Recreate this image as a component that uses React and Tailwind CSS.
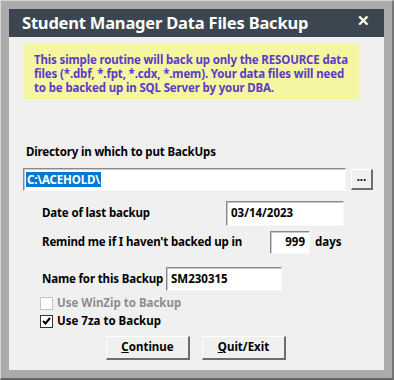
import React from "react";

const font = { fontFamily: '"Noto Sans", "Open Sans", sans-serif' };

const Sunken = ({ className = "", children }) => (
  <div
    className={`bg-white border-t border-l border-[#8a8a8a] border-b border-r border-b-[#f8f8f8] border-r-[#f8f8f8] shadow-[inset_1px_1px_0_#c8c8c8] flex items-center ${className}`}
  >
    {children}
  </div>
);

const Raised = ({ className = "", children }) => (
  <button
    className={`bg-[#f0f0f0] border-t border-l border-white border-b-2 border-r-2 border-b-[#6e6e6e] border-r-[#6e6e6e] flex items-center justify-center text-[11.5px] font-bold text-black ${className}`}
  >
    {children}
  </button>
);

const Check = ({ checked, disabled, label }) => (
  <div className="flex items-center h-[13px]">
    <div
      className={`w-[13px] h-[13px] bg-white border flex items-center justify-center ${
        disabled ? "border-[#c4c4c4]" : "border-[#333]"
      }`}
    >
      {checked && (
        <svg width="9" height="8" viewBox="0 0 9 8">
          <path d="M1 4 L3.5 6.5 L8 1" stroke="#000" strokeWidth="2" fill="none" />
        </svg>
      )}
    </div>
    <span
      className={`ml-[4px] text-[11.5px] font-bold whitespace-nowrap ${disabled ? "text-[#8d8d8d]" : "text-black"}`}
    >
      {label}
    </span>
  </div>
);

export default function App() {
  return (
    <div
      style={font}
      className="w-[394px] h-[380px] bg-[#ababab] border-t border-l border-[#d6d6d6] border-b-2 border-r-2 border-b-[#666] border-r-[#777] p-[8px] flex flex-col"
    >
      {/* Title bar */}
      <div className="h-[28px] bg-[#3c4650] flex items-center justify-between pl-[13px] pr-[14px]">
        <span className="text-white font-bold text-[16.5px] leading-none tracking-[-0.2px]">
          Student Manager Data Files Backup
        </span>
        <span className="text-white font-bold text-[15px] leading-none -mt-[6px]">✕</span>
      </div>

      {/* Body */}
      <div className="flex-1 bg-[#f0f0f0] pl-[15px] pr-[10px] pt-[7px] flex flex-col">
        <div className="w-[335px] h-[55px] bg-[#f5f5a2] px-[10px] pt-[9px] text-[11.5px] font-bold leading-[14px] text-[#5b3cc4] tracking-[-0.15px]">
          This simple routine will back up only the RESOURCE data files (*.dbf, *.fpt, *.cdx, *.mem). Your data files will need to be backed up in SQL Server by your DBA.
        </div>

        <div className="mt-[47px] ml-[2px] text-[11.5px] font-bold text-black leading-none tracking-[-0.15px]">
          Directory in which to put BackUps
        </div>

        <div className="mt-[10px] flex items-center -ml-[1px]">
          <Sunken className="w-[323px] h-[23px] px-[2px]">
            <span className="bg-[#0078d7] text-white text-[11.5px] font-bold leading-[15px] px-[1px] tracking-[-0.15px]">
              C:\ACEHOLD\
            </span>
          </Sunken>
          <Raised className="ml-[5px] w-[22px] h-[21px] pb-[4px]">...</Raised>
        </div>

        <div className="mt-[10px] flex items-center pl-[18px]">
          <span className="w-[184px] text-[11.5px] font-bold tracking-[-0.15px] whitespace-nowrap">Date of last backup</span>
          <Sunken className="w-[118px] h-[25px] px-[4px]">
            <span className="text-[11.5px] font-bold">03/14/2023</span>
          </Sunken>
        </div>

        <div className="mt-[5px] flex items-center pl-[18px]">
          <span className="w-[228px] text-[11.5px] font-bold tracking-[-0.15px] whitespace-nowrap">
            Remind me if I haven't backed up in
          </span>
          <Sunken className="w-[40px] h-[23px] justify-end px-[4px]">
            <span className="text-[11.5px] font-bold">999</span>
          </Sunken>
          <span className="ml-[5px] text-[11.5px] font-bold">days</span>
        </div>

        <div className="mt-[13px] flex items-center pl-[18px]">
          <span className="w-[124px] text-[11.5px] font-bold tracking-[-0.15px] whitespace-nowrap">Name for this Backup</span>
          <Sunken className="w-[116px] h-[24px] px-[4px]">
            <span className="text-[11.5px] font-bold">SM230315</span>
          </Sunken>
        </div>

        <div className="mt-[6px] ml-[16px] flex flex-col gap-[5px]">
          <Check disabled label="Use WinZip to Backup" />
          <Check checked label="Use 7za to Backup" />
        </div>

        <div className="mt-[8px] flex gap-[12px] ml-[82px]">
          <Raised className="w-[84px] h-[24px]">
            <span>
              <span className="underline">C</span>ontinue
            </span>
          </Raised>
          <Raised className="w-[84px] h-[24px]">
            <span>
              <span className="underline">Q</span>uit/Exit
            </span>
          </Raised>
        </div>
      </div>
    </div>
  );
}
